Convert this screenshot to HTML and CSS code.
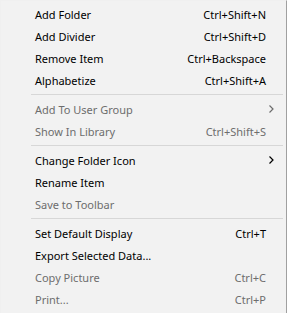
FILE: index.html
```html
<!DOCTYPE html>
<html lang="en">
<head>
    <meta charset="UTF-8">
    <title>Context Menu</title>
    <link rel="stylesheet" href="styles.css">
</head>
<body>
    <div class="menu">
        <div class="item"><span class="label">Add Folder</span><span class="key">Ctrl+Shift+N</span></div>
        <div class="item"><span class="label">Add Divider</span><span class="key">Ctrl+Shift+D</span></div>
        <div class="item"><span class="label">Remove Item</span><span class="key">Ctrl+Backspace</span></div>
        <div class="item"><span class="label">Alphabetize</span><span class="key">Ctrl+Shift+A</span></div>
        <div class="separator"></div>
        <div class="item disabled">
            <span class="label">Add To User Group</span>
            <svg class="arrow" width="5" height="8" viewBox="0 0 5 8"><polyline points="0.5,0.5 4,4 0.5,7.5" fill="none" stroke="currentColor" stroke-width="1.2"/></svg>
        </div>
        <div class="item disabled"><span class="label">Show In Library</span><span class="key">Ctrl+Shift+S</span></div>
        <div class="separator"></div>
        <div class="item">
            <span class="label">Change Folder Icon</span>
            <svg class="arrow" width="5" height="8" viewBox="0 0 5 8"><polyline points="0.5,0.5 4,4 0.5,7.5" fill="none" stroke="currentColor" stroke-width="1.2"/></svg>
        </div>
        <div class="item"><span class="label">Rename Item</span></div>
        <div class="item disabled"><span class="label">Save to Toolbar</span></div>
        <div class="separator"></div>
        <div class="item"><span class="label">Set Default Display</span><span class="key">Ctrl+T</span></div>
        <div class="item"><span class="label">Export Selected Data...</span></div>
        <div class="item disabled"><span class="label">Copy Picture</span><span class="key">Ctrl+C</span></div>
        <div class="item disabled"><span class="label">Print...</span><span class="key">Ctrl+P</span></div>
    </div>
</body>
</html>
```

FILE: styles.css
```css
body {
    margin: 0;
    padding: 0;
    background: #ffffff;
}

.menu {
    width: 285px;
    height: 309px;
    padding: 2px 0 1px 0;
    background: #f2f2f2;
    border-top: 1px solid #f0f0f0;
    border-left: 1px solid #f0f0f0;
    border-right: 1px solid #a0a0a0;
    border-bottom: 1px solid #a0a0a0;
    font-family: "Noto Sans", "Open Sans", sans-serif;
    font-size: 11px;
    color: #000;
}

.item {
    display: flex;
    align-items: center;
    height: 22px;
    padding: 0 20px 0 34px;
}

.item.disabled {
    color: #6d6d6d;
}

.label {
    flex: 1;
}

.key {
    text-align: right;
}

.arrow {
    margin-right: -8px;
}

.separator {
    height: 1px;
    margin: 3px 3px 3px 30px;
    background: #d7d7d7;
}
```
